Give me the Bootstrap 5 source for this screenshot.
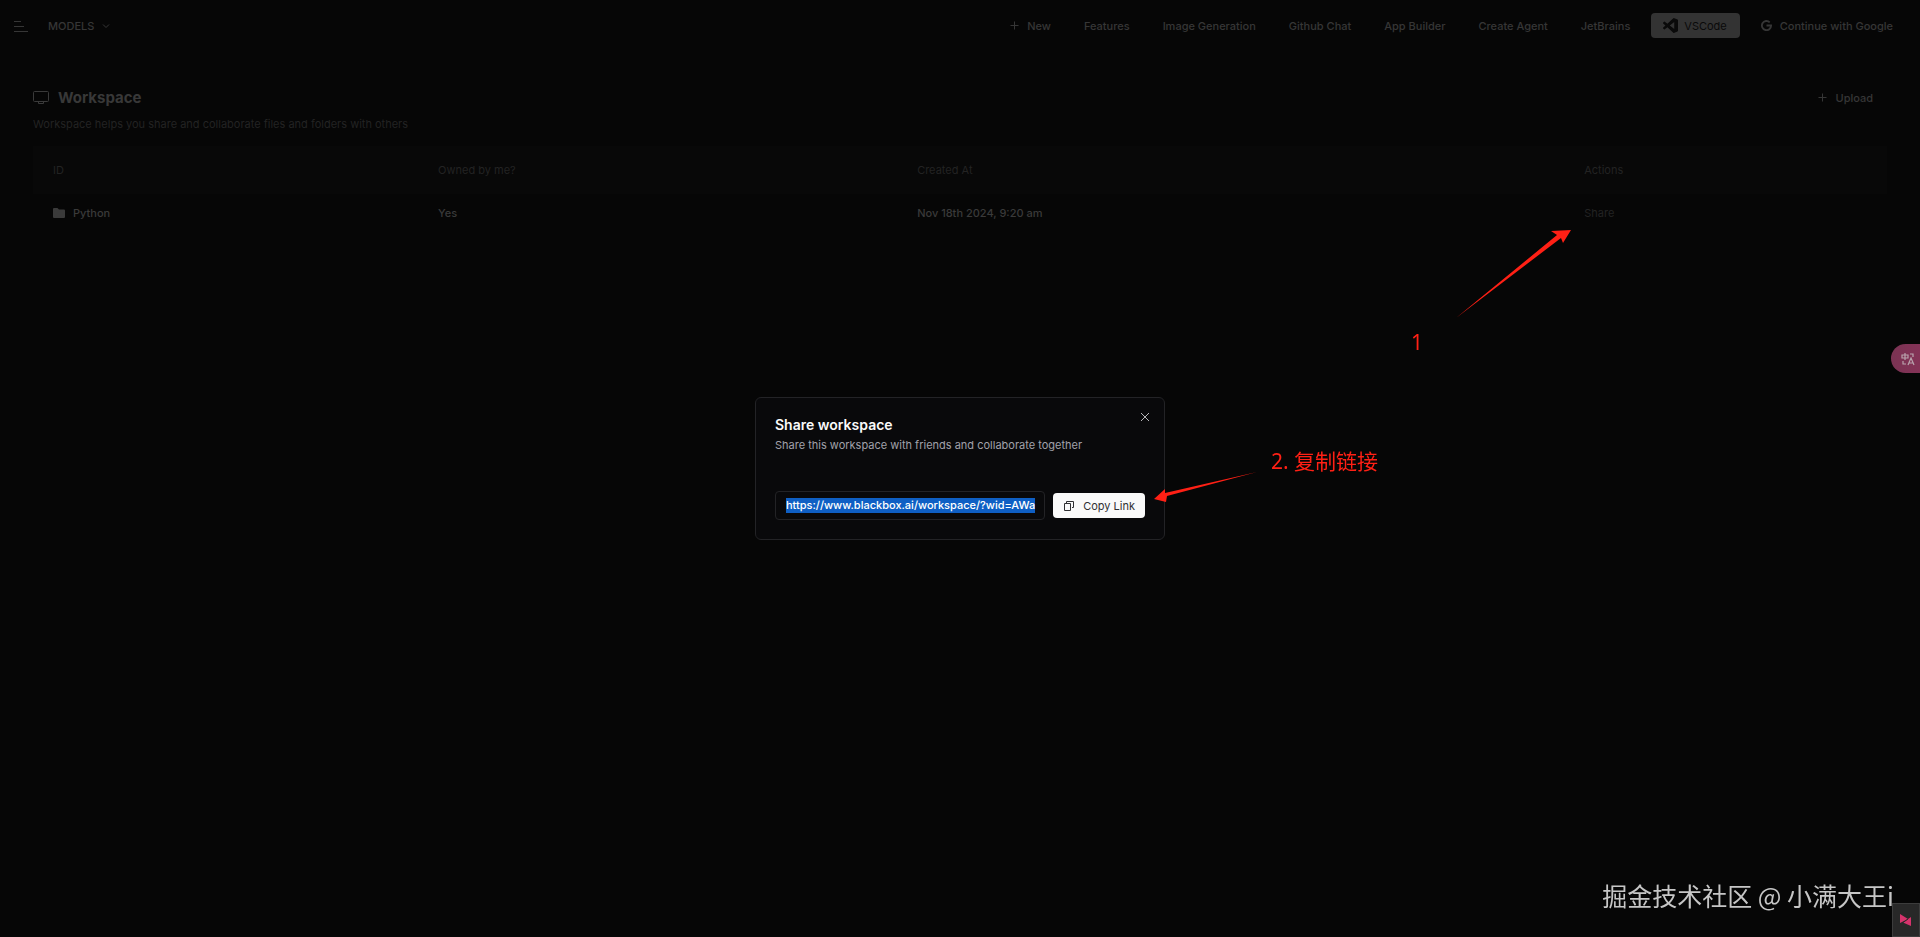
<!DOCTYPE html>
<html lang="en" data-bs-theme="dark">
<head>
<meta charset="utf-8">
<meta name="viewport" content="width=device-width, initial-scale=1">
<title>Workspace</title>
<link href="https://cdn.jsdelivr.net/npm/bootstrap@5.3.0/dist/css/bootstrap.min.css" rel="stylesheet">
<style>
  body { background: #060606; color: #3a3a3a; font: 500 11px/16px Inter, "Noto Sans CJK SC", sans-serif; min-height: 100vh; }
  svg { display: block; flex: none; }
  .topbar { padding: 13px 15px 13px 12px; }
  .top-links { gap: 9px; }
  .tool { display: inline-flex; align-items: center; gap: 8px; height: 25px; padding: 0 12px; border: 0; border-radius: 4px; background: transparent; color: #363636; font: inherit; text-decoration: none; white-space: nowrap; }
  .tool-solid { gap: 6px; padding: 0 13px 0 12px; background: #333; color: #0a0a0a; font-weight: 400; }
  .tool-upload { padding: 0 14px; }
  .page-body { padding: 34px 33px 0; }
  .page-title { font-size: 15px; line-height: 24px; font-weight: 700; color: #383838; }
  .dim { margin: 6px 0 0; color: #232323; font-weight: 400; }
  .files { table-layout: fixed; width: 100%; margin-top: 14px; }
  .files th, .files td { padding: 0 20px; height: 38px; }
  .files th { height: 48px; color: #232323; font-weight: 400; background: #080808; }
  .files a { color: #232323; text-decoration: none; font-weight: 400; }
  .share-dialog { max-width: 410px; }
  .share-box { background: #09090b; border: 1px solid #232326; border-radius: 6px; padding: 19px; }
  .share-title { font-size: 14px; line-height: 16px; font-weight: 600; color: #fafafa; margin-bottom: 4px; }
  .share-text { color: #a1a1aa; font-weight: 400; margin-bottom: 38px; }
  .share-close { position: absolute; top: 13px; right: 13px; padding: 0; border: 0; background: none; color: #b5b5b8; }
  .link-field { min-width: 0; height: 29px; padding: 0 8px 0 10px; background: #09090b; border: 1px solid #232326; border-radius: 4px; }
  .link-input { width: 100%; padding: 0; border: 0; outline: 0; background: transparent; color: #fff; font: inherit; line-height: 15px; height: 15px; }
  .link-input::selection { background: #0f5fc4; color: #fff; }
  .copy { height: 25px; padding: 0 10px; gap: 8px; border: 0; border-radius: 4px; background: #fafafa; color: #303033; font: inherit; font-weight: 400; white-space: nowrap; }
  .note { position: absolute; z-index: 1070; color: #ff2015; font: 400 21px/28px "Noto Sans", "Noto Sans CJK SC", sans-serif; }
  .arrow { position: absolute; z-index: 1070; fill: #ff2015; }
  .note-one { left: 1411px; top: 328px; }
  .arrow-one { left: 1452px; top: 228px; }
  .note-two { left: 1271px; top: 447px; }
  .arrow-two { left: 1151px; top: 468px; }
  .translate { position: fixed; right: 0; top: 344px; z-index: 1070; width: 29px; height: 29px; padding: 0 0 0 10px; border: 0; border-radius: 15px 0 0 15px; background: linear-gradient(90deg, #7a3353, #843357); color: #b9a3ad; }
  .watermark { position: fixed; right: 26px; bottom: 25px; z-index: 1070; color: #c6c6c6; font: 400 25px/34px "Noto Sans CJK SC", sans-serif; white-space: nowrap; }
  .corner { position: fixed; right: 0; bottom: 0; z-index: 1071; width: 28px; height: 34px; padding: 0 0 0 7px; border: 1px solid #3c3c3c; background: #282828; }
</style>
</head>
<body>
<nav class="topbar d-flex align-items-center justify-content-between">
  <div class="d-flex align-items-center gap-2">
    <button class="tool p-0 border-0" type="button" aria-label="Menu">
      <svg width="16" height="14" viewBox="0 0 16 14" fill="none" stroke="currentColor"><path d="M2 2.500h7M2 7.500h10M2 12.500h14"/></svg>
    </button>
    <button class="tool" type="button">MODELS
      <svg width="8" height="8" viewBox="0 0 8 8" fill="none" stroke="currentColor"><path d="m1 2.500 3 3 3-3"/></svg>
    </button>
  </div>
  <div class="top-links d-flex align-items-center">
    <a class="tool" href="#"><svg width="9" height="9" viewBox="0 0 9 9" stroke="currentColor"><path d="M4.500 .5v8M.5 4.500h8"/></svg>New</a>
    <a class="tool" href="#">Features</a>
    <a class="tool" href="#">Image Generation</a>
    <a class="tool" href="#">Github Chat</a>
    <a class="tool" href="#">App Builder</a>
    <a class="tool" href="#">Create Agent</a>
    <a class="tool" href="#">JetBrains</a>
    <a class="tool tool-solid" href="#"><svg width="15" height="15" viewBox="0 0 24 24" fill="currentColor"><path d="M23.150 2.587 18.210.210a1.490 1.490 0 0 0-1.700.290l-9.460 8.630-4.120-3.128a1 1 0 0 0-1.276.057L.327 7.261A1 1 0 0 0 .326 8.740L3.899 12 .326 15.260a1 1 0 0 0 .001 1.479L1.650 17.940a1 1 0 0 0 1.276.057l4.120-3.128 9.460 8.630a1.490 1.490 0 0 0 1.704.290l4.942-2.377A1.500 1.500 0 0 0 24 20.060V3.939a1.500 1.500 0 0 0-.850-1.352zm-5.146 14.861L10.826 12l7.178-5.448v10.896z"/></svg>VSCode</a>
    <a class="tool" href="#"><svg width="11" height="11" viewBox="0 0 24 24" fill="none" stroke="currentColor" stroke-width="4"><path d="M19 5A10 10 0 1 0 22 12H12"/></svg>Continue with Google</a>
  </div>
</nav>

<main class="page-body">
  <div class="d-flex align-items-center justify-content-between">
    <div class="d-flex align-items-center gap-2">
      <svg width="17" height="15" viewBox="0 0 17 15" fill="none" stroke="currentColor"><rect x=".5" y="1.500" width="15" height="10" rx="1"/><path d="M5.500 11.500v2h5v-2"/></svg>
      <h1 class="page-title m-0">Workspace</h1>
    </div>
    <button class="tool tool-upload" type="button"><svg width="9" height="9" viewBox="0 0 9 9" stroke="currentColor"><path d="M4.500 .5v8M.5 4.500h8"/></svg>Upload</button>
  </div>
  <p class="dim">Workspace helps you share and collaborate files and folders with others</p>
  <table class="files">
    <colgroup><col style="width:20.770%"><col style="width:25.840%"><col style="width:35.980%"><col></colgroup>
    <thead><tr><th>ID</th><th>Owned by me?</th><th>Created At</th><th>Actions</th></tr></thead>
    <tbody><tr>
      <td><span class="d-flex align-items-center gap-2"><svg width="12" height="10" viewBox="0 0 12 10" fill="currentColor"><path d="M1 0h3.500L6 1.500h5a1 1 0 0 1 1 1V9a1 1 0 0 1-1 1H1a1 1 0 0 1-1-1V1a1 1 0 0 1 1-1z"/></svg>Python</span></td>
      <td>Yes</td><td>Nov 18th 2024, 9:20 am</td><td><a href="#">Share</a></td>
    </tr></tbody>
  </table>
</main>

<div class="modal d-block" role="dialog" aria-labelledby="shareTitle">
  <div class="modal-dialog modal-dialog-centered share-dialog">
    <div class="modal-content share-box">
      <button class="share-close" type="button" aria-label="Close"><svg width="12" height="12" viewBox="0 0 12 12" stroke="currentColor"><path d="m2 2 8 8M10 2l-8 8"/></svg></button>
      <h2 class="share-title" id="shareTitle">Share workspace</h2>
      <p class="share-text">Share this workspace with friends and collaborate together</p>
      <div class="d-flex align-items-center gap-2">
        <div class="link-field flex-fill d-flex align-items-center"><input class="link-input" id="shareLink" type="text" aria-label="Workspace link" readonly value="https://www.blackbox.ai/workspace/?wid=AWa"></div>
        <button class="copy d-flex align-items-center" type="button"><svg width="12" height="12" viewBox="0 0 12 12" fill="none" stroke="currentColor"><path d="M3.500 3V1.500h7v6H9M1.500 3.500h6v7h-6z"/></svg>Copy Link</button>
      </div>
    </div>
  </div>
</div>

<svg class="arrow arrow-one" width="122" height="92" viewBox="0 0 122 92"><path d="M4 90 105 7l-6-4 20-1-8 13-2-5z"/></svg>
<span class="note note-one">1</span>
<svg class="arrow arrow-two" width="108" height="36" viewBox="0 0 108 36"><path d="M106 4 16 28l-1 6L3 31l11-10v4z"/></svg>
<span class="note note-two">2. 复制链接</span>

<button class="translate" type="button" aria-label="Translate"><svg width="14" height="14" viewBox="0 0 14 14" fill="none" stroke="currentColor" stroke-width="1.200"><path d="M1 3h6v3H1zM4 1v7M9 2h3v3M2 9v3h3M7 13l3-7 3 7M8 11h4"/></svg></button>
<div class="watermark">掘金技术社区 @ 小满大王i</div>
<button class="corner" type="button" aria-label="Assistant"><svg width="12" height="12" viewBox="0 0 12 12" fill="#d6336c"><path d="M0 0l8 5-8 4zM11 3v9L3 8.500z"/><path d="M3 8.500 8 5" stroke="#282828"/></svg></button>

<script src="https://cdn.jsdelivr.net/npm/bootstrap@5.3.0/dist/js/bootstrap.bundle.min.js"></script>
<script>
  const link = document.getElementById('shareLink');
  link.focus();
  link.select();
</script>
</body>
</html>
